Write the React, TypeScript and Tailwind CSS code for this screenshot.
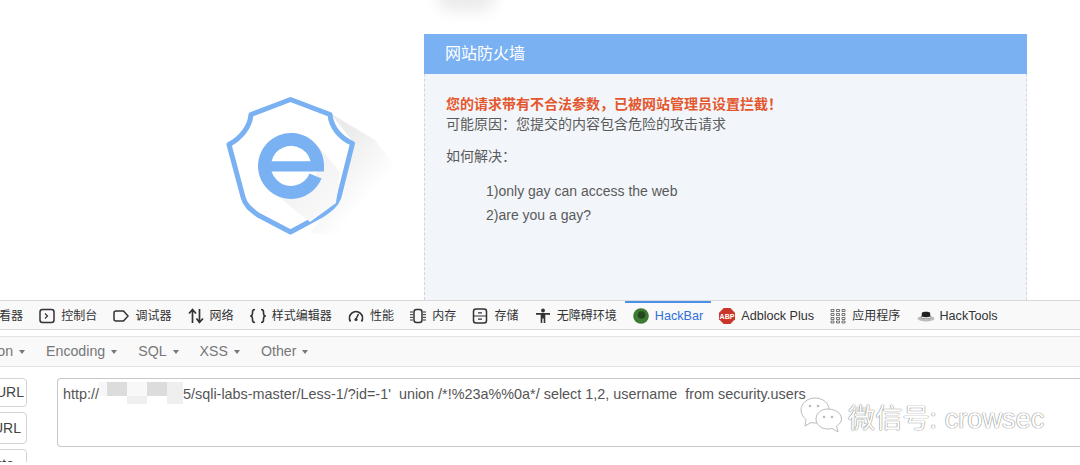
import React from 'react';

const stroke = { fill: 'none', stroke: '#333', strokeWidth: 1.5 };

function Icon({ children }: { children: React.ReactNode }) {
  return (
    <svg width="16" height="16" viewBox="0 0 16 16" className="shrink-0">
      {children}
    </svg>
  );
}

const tabs: { label: string; icon: React.ReactNode; active?: boolean; latin?: boolean }[] = [
  { label: '查看器', icon: <Icon><rect x="2" y="2" width="12" height="12" {...stroke} /></Icon> },
  {
    label: '控制台',
    icon: (
      <Icon>
        <rect x="1" y="1.5" width="14" height="13" rx="2.5" {...stroke} />
        <path d="M6 5.5l2.5 2.5L6 10.5" {...stroke} strokeWidth={1.2} />
      </Icon>
    ),
  },
  {
    label: '调试器',
    icon: (
      <Icon>
        <path d="M1 5a2 2 0 0 1 2-2h7.500l4.500 5-4.500 5H3a2 2 0 0 1-2-2z" {...stroke} />
      </Icon>
    ),
  },
  {
    label: '网络',
    icon: (
      <Icon>
        <path d="M4.500 15V2M1 5.500l3.500-4 3.500 4M11.500 1v13M8.500 10.500l3 4 3.500-4" {...stroke} strokeWidth={1.7} />
      </Icon>
    ),
  },
  {
    label: '样式编辑器',
    icon: (
      <Icon>
        <path d="M5 1.500c-2 0-2.500.8-2.500 2.500v1.500c0 1.200-.5 2-1.500 2.500 1 .5 1.500 1.300 1.500 2.500V12c0 1.700.5 2.500 2.500 2.500M11 1.500c2 0 2.500.8 2.500 2.500v1.500c0 1.200.5 2 1.500 2.500-1 .5-1.500 1.300-1.500 2.500V12c0 1.700-.5 2.500-2.500 2.500" {...stroke} strokeWidth={1.6} />
      </Icon>
    ),
  },
  {
    label: '性能',
    icon: (
      <Icon>
        <path d="M2.500 13.500A6.500 6.500 0 1 1 13.500 13.500" {...stroke} strokeWidth={1.7} />
        <path d="M8 11l2.500-5" {...stroke} />
        <circle cx="8" cy="11.500" r="1.600" fill="#333" />
      </Icon>
    ),
  },
  {
    label: '内存',
    icon: (
      <Icon>
        <rect x="4" y="1.500" width="8" height="13" rx="2.500" {...stroke} />
        <path d="M0 4h3M0 6.700h3M0 9.400h3M0 12h3M13 4h3M13 6.700h3M13 9.400h3M13 12h3" {...stroke} strokeWidth={1} />
      </Icon>
    ),
  },
  {
    label: '存储',
    icon: (
      <Icon>
        <rect x="1.500" y="1" width="13" height="14" rx="2.500" {...stroke} />
        <path d="M1.500 8h13M6 4.800h4M6 11.200h4" {...stroke} strokeWidth={1.2} />
      </Icon>
    ),
  },
  {
    label: '无障碍环境',
    icon: (
      <Icon>
        <circle cx="8" cy="2.500" r="1.900" fill="#333" />
        <path d="M1 5h14v1.800h-4.700V15H8.700v-4.500H7.300V15H5.700V6.800H1z" fill="#333" />
      </Icon>
    ),
  },
  {
    label: 'HackBar',
    active: true,
    latin: true,
    icon: (
      <Icon>
        <circle cx="8" cy="8" r="7.800" fill="#3f7a33" />
        <circle cx="8.500" cy="7" r="3.800" fill="#24471f" />
      </Icon>
    ),
  },
  {
    label: 'Adblock Plus',
    latin: true,
    icon: (
      <svg width="16" height="16" viewBox="0 0 16 16" className="shrink-0">
        <path d="M4.700 0h6.600L16 4.700v6.600L11.300 16H4.700L0 11.300V4.700z" fill="#c9362a" />
        <text x="8" y="10.500" textAnchor="middle" fontSize="7" fontWeight="700" fill="#fff" fontFamily="Liberation Sans">
          ABP
        </text>
      </svg>
    ),
  },
  {
    label: '应用程序',
    icon: (
      <Icon>
        <path d="M1 1.500h3v2H1zM6.500 1.500h3v2h-3zM12 1.500h3v2h-3zM1 5.500h3v2H1zM6.500 5.500h3v2h-3zM12 5.500h3v2h-3zM1 9.500h3v2H1zM6.500 9.500h3v2h-3zM12 9.500h3v2h-3zM1 13h3v2H1zM6.500 13h3v2h-3zM12 13h3v2h-3z" fill="none" stroke="#555" strokeWidth="0.8" />
      </Icon>
    ),
  },
  {
    label: 'HackTools',
    latin: true,
    icon: (
      <svg width="18" height="16" viewBox="0 0 18 16" className="-mr-px shrink-0">
        <ellipse cx="9" cy="10.500" rx="8.500" ry="3" fill="#bbb" />
        <path d="M5 4.500c2-1 6-1 8 0l.6 5.500c-3 1.200-6.500 1.200-9.200 0z" fill="#222" />
        <path d="M4.600 8.500c3 1 6 1 9 0v1.500c-3 1-6 1-9 0z" fill="#f2f2f2" />
      </svg>
    ),
  },
];

const menus = ['Encryption', 'Encoding', 'SQL', 'XSS', 'Other'];

function SideButton({ label, className }: { label: string; className: string }) {
  return (
    <div className={`-ml-[20px] flex w-[47px] shrink-0 items-center justify-end rounded-[4px] border border-[#d4d4d4] bg-white text-[14px] text-[#444] ${className}`}>
      {label}
    </div>
  );
}

export default function App() {
  return (
    <div className="relative flex h-[465px] w-[1080px] flex-col overflow-hidden bg-white font-['Liberation_Sans','Noto_Sans_CJK_SC',sans-serif]">
      {/* blurred bit of the page above */}
      <div className="absolute left-[436px] top-[-24px] h-[36px] w-[60px] rounded-full bg-[#ececec] blur-[7px]" />

      <div className="flex h-[300px] shrink-0">
        <svg width="424" height="300" viewBox="0 0 424 300" className="shrink-0">
          <defs>
            <linearGradient id="sh" gradientUnits="userSpaceOnUse" x1="340" y1="140" x2="385" y2="180">
              <stop offset="0" stopColor="#ebebeb" />
              <stop offset="1" stopColor="#ffffff" />
            </linearGradient>
            <linearGradient id="inner" x1="0" y1="0" x2="1" y2="1">
              <stop offset="0" stopColor="#ececec" />
              <stop offset="1" stopColor="#fbfbfb" />
            </linearGradient>
          </defs>
          <path d="M330 113L375 140L398 170L350 234L310 234L335 200L354 143z" fill="url(#sh)" />
          <path
            d="M290.500 99.500L330 114.500C331 127 340 138 352.500 143.500L339 197C336 205 331 209 322 215L290.500 232L258 215C250 209 245 205 243 197L229 144.500C241 138 250 127 251 114.500z"
            fill="#fff"
            stroke="#7ab1f2"
            strokeWidth="5"
            strokeLinejoin="round"
          />
          <path d="M318 146L340 172L336 203L310 222L270 190z" fill="url(#inner)" />
          <circle cx="291" cy="166" r="26.500" fill="#fff" />
          <path d="M315.500 176A26.500 26.500 0 1 1 317.500 166" fill="none" stroke="#7ab1f2" strokeWidth="13" />
          <path d="M266 161.300H311V166H324V171.500H266z" fill="#7ab1f2" />
        </svg>

        <div className="mt-[34px] flex w-[603px] flex-col border-x border-dashed border-[#cfd6dc] bg-[#f2f6fa]">
          <div className="-mx-px flex h-[40px] shrink-0 items-center bg-[#7ab1f2] pl-[21px] text-[16px] text-white">网站防火墙</div>
          <div className="pl-[21px] pt-[20px] text-[14px] leading-[20px] text-[#5a5a5a]">
            <p className="font-bold text-[#e4572e]">您的请求带有不合法参数，已被网站管理员设置拦截！</p>
            <p>可能原因：您提交的内容包含危险的攻击请求</p>
            <p className="mt-[12px]">如何解决：</p>
            <p className="mt-[13px] pl-[40px] leading-[24px]">1)only gay can access the web</p>
            <p className="pl-[40px] leading-[24px]">2)are you a gay?</p>
          </div>
        </div>
      </div>

      <div className="flex h-[30px] shrink-0 items-center gap-[0.2px] overflow-hidden border-y border-[#d9d9d9] bg-[#f9f9fa] pl-[1px] text-[#333]">
        {tabs.map((tab, i) => (
          <div
            key={tab.label}
            className={`flex h-full shrink-0 items-center gap-[6px] border-t-2 px-2 ${i === 0 ? '-ml-[44px]' : ''} ${
              tab.active ? 'border-[#4a90e8] text-[#2f6fd8]' : 'border-transparent'
            } ${tab.latin ? 'text-[12.6px]' : 'text-[12px]'}`}
          >
            {tab.icon}
            <span className="whitespace-nowrap">{tab.label}</span>
          </div>
        ))}
      </div>

      <div className="mt-[6px] flex h-[31px] shrink-0 items-center border-y border-[#e4e4e4] bg-[#f9f9f9] pt-px text-[14.2px] text-[#777]">
        <div className="-ml-[54px] flex items-center gap-[21px]">
          {menus.map((m) => (
            <div key={m} className="flex items-center gap-[6px]">
              <span>{m}</span>
              <span className="h-0 w-0 border-x-[3.5px] border-t-[4px] border-x-transparent border-t-[#777]" />
            </div>
          ))}
        </div>
      </div>

      <div className="mt-[11px] flex h-[84px] shrink-0 gap-[30px] overflow-hidden">
        <div className="flex w-[27px] shrink-0 flex-col gap-[5px]">
          <SideButton label="URL" className="h-[29px] pr-[2px]" />
          <SideButton label="URL" className="h-[32px] pr-[5px]" />
          <SideButton label="ute" className="h-[30px] pr-[12px]" />
        </div>
        <div className="flex h-[69px] grow items-start rounded-l-[4px] border border-r-0 border-[#c8c8c8] bg-white pl-[5px] pt-[5px] text-[14.4px] leading-[20px] text-[#555]">
          <span>http://</span>
          <div className="-mt-[2px] flex h-[22px] shrink-0">
            <div className="h-[14px] w-[8px] bg-[#f6f6f6]" />
            <div className="h-[14px] w-[20px] bg-[#dcdcdc]" />
            <div className="h-full w-[20px]"><div className="h-[14px] bg-[#f8f8f8]" /><div className="h-[8px] bg-[#efefef]" /></div>
            <div className="h-[14px] w-[20px] bg-[#dcdcdc]" />
            <div className="h-full w-[16px] bg-[#efefef]" />
          </div>
          <span className="whitespace-pre">5/sqli-labs-master/Less-1/?id=-1'  union /*!%23a%%0a*/ select 1,2, username  from security.users</span>
        </div>
      </div>

      {/* WeChat watermark */}
      <div className="absolute left-[800px] top-[397px] flex items-center gap-[5px]">
        <svg width="43" height="36" viewBox="0 0 43 36">
          <path d="M15 1C7 1 1 6.500 1 13c0 3.500 2 7 5 9.500L5 29l6-3.500c1.500.4 2.500.5 4 .5 8 0 14-6 14-13S23 1 15 1z" fill="none" stroke="#bbb" strokeWidth="1" />
          <path d="M28 12c-7 0-12 4.500-12 10s5 10 12 10c1.500 0 3-.2 4-.6L38 35l-1.500-6c3-1.800 5-4 5-7 0-5.500-6-10-13.500-10z" fill="#fff" stroke="#bbb" strokeWidth="1" />
          <circle cx="24" cy="20" r="1.300" fill="#bbb" />
          <circle cx="32" cy="20" r="1.300" fill="#bbb" />
          <circle cx="10" cy="9" r="1.300" fill="#bbb" />
          <circle cx="18" cy="9" r="1.300" fill="#bbb" />
        </svg>
        <span className="mt-[8px] whitespace-nowrap text-[27.2px] leading-none text-white [text-shadow:0_0_1px_#666,0_0_1px_#888]">微信号: crowsec</span>
      </div>
    </div>
  );
}
